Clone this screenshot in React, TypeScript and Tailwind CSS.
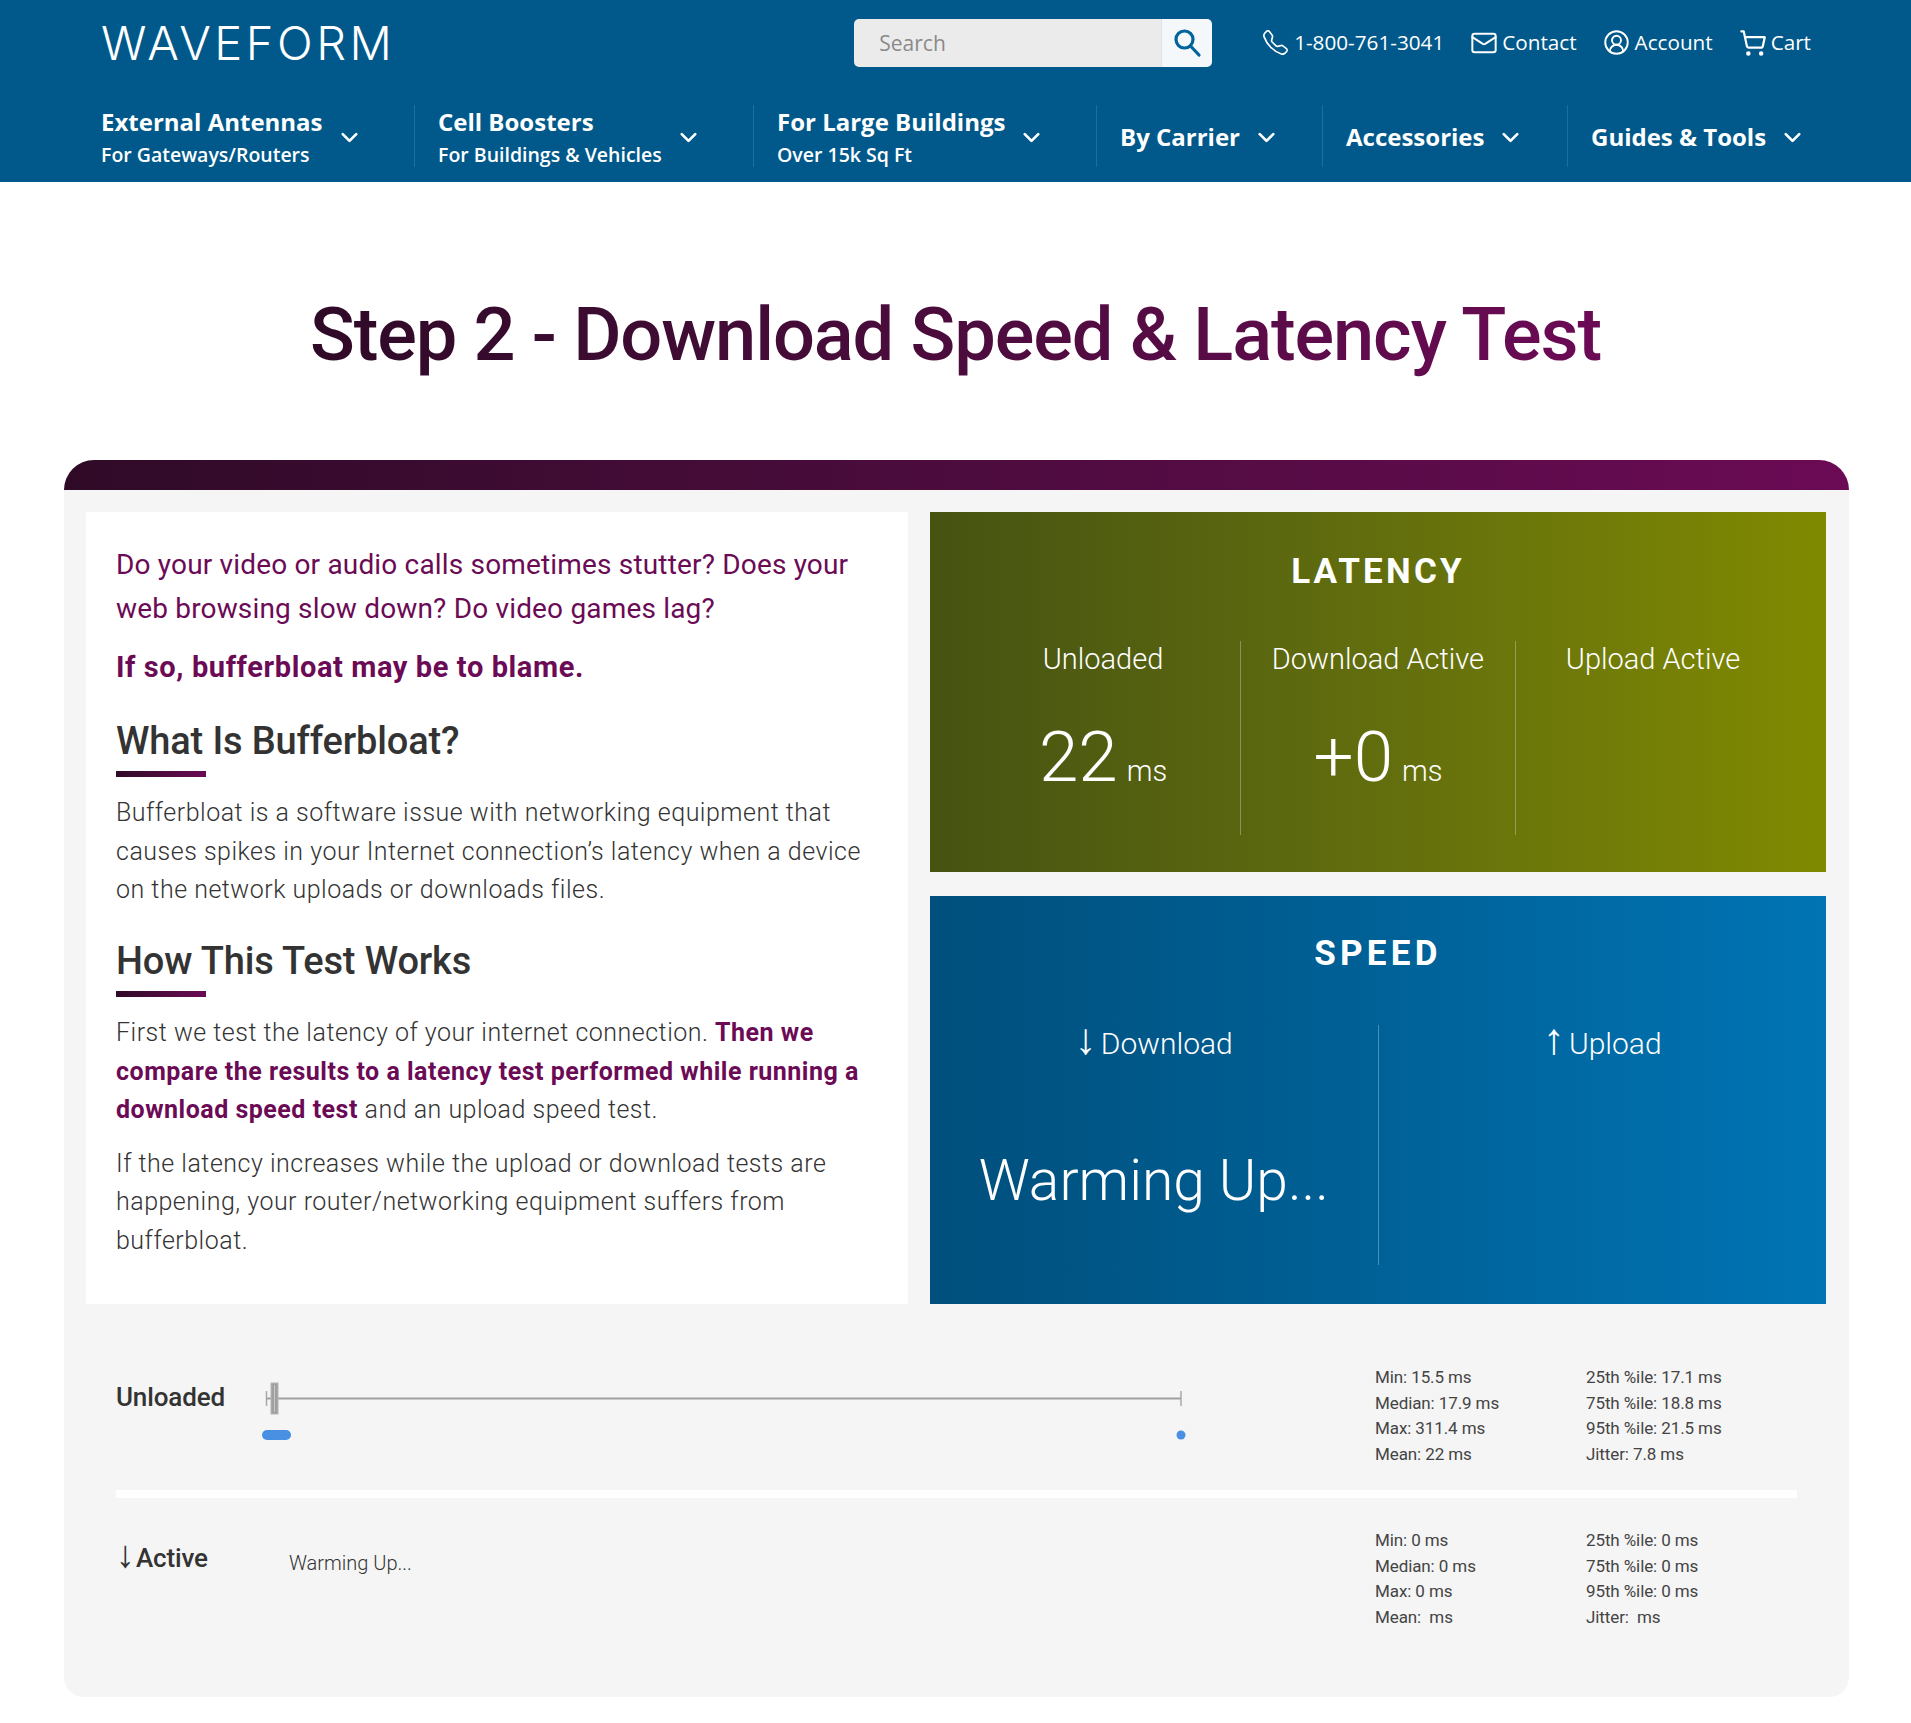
import React from "react";
import { ChevronDown, CircleUserRound, Mail, ShoppingCart } from "lucide-react";
import { BsTelephone } from "react-icons/bs";

const body = "font-['Roboto',sans-serif]";
const arrow = "font-['Liberation_Serif',serif] font-normal text-[1.45em] leading-none -mr-[3px]";
const arrowTight = "font-['Liberation_Serif',serif] font-normal text-[1.45em] leading-none -mr-[5px]";
const para = "text-[25px] leading-[38.6px] text-[#333333] font-light tracking-[0.5px]";
const nav = [
  { w: "w-[313px]", first: true, t: "External Antennas", s: "For Gateways/Routers" },
  { w: "w-[339px]", t: "Cell Boosters", s: "For Buildings & Vehicles" },
  { w: "w-[343px]", t: "For Large Buildings", s: "Over 15k Sq Ft" },
  { w: "w-[226px]", t: "By Carrier" },
  { w: "w-[245px]", t: "Accessories" },
  { w: "w-[243px]", t: "Guides & Tools" },
];

function Heading({ children }: { children: React.ReactNode }) {
  return (
    <div className="mb-[17px]">
      <h2 className="text-[38px] leading-[46px] font-medium text-[#333333] tracking-[-0.15px]">{children}</h2>
      <div className="mt-[7px] h-[6px] w-[90px] bg-gradient-to-r from-[#2f0a27] to-[#6b0a55]" />
    </div>
  );
}

function Stats({ a, b, top }: { a: string[]; b: string[]; top?: boolean }) {
  return (
    <div className={`ml-auto flex w-[422px] text-[17px] leading-[25.6px] text-[#444444] tracking-[-0.1px] ${top ? "mt-[2px]" : ""}`}>
      <div className="w-[211px]">{a.map((x) => <div key={x} className="whitespace-pre">{x}</div>)}</div>
      <div>{b.map((x) => <div key={x} className="whitespace-pre">{x}</div>)}</div>
    </div>
  );
}

function Metric({ label, value, border }: { label: string; value?: string; border?: boolean }) {
  return (
    <div className={`flex-1 h-[194px] flex flex-col items-center ${border ? "border-r border-white/30" : ""}`}>
      <div className="text-[29px] leading-[36px] font-light">{label}</div>
      {value && (
        <div className="mt-[40px] flex items-baseline gap-[9px] leading-[80px]">
          <span className="text-[71px] font-light">{value}</span>
          <span className="text-[29px] font-light">ms</span>
        </div>
      )}
    </div>
  );
}

export default function App() {
  return (
    <div className={`${body} bg-white min-h-[1723px] pb-[26px]`}>
      <header className="bg-[#00598a] h-[182px] text-white font-['Open_Sans',sans-serif] pl-[101px]">
        <div className="flex items-center h-[86px] pr-[100px]">
          <div className="font-['Inter',sans-serif] font-light text-[47px] leading-none tracking-[3.5px] -mt-[2px]">WAVEFORM</div>
          <div className="ml-[459px] flex h-[48px] w-[358px] rounded-[5px] overflow-hidden">
            <div className="flex-1 bg-[#ebebeb] text-[#8a8a8a] text-[21px] flex items-center pl-[25px] pt-[2px]">Search</div>
            <div className="w-[51px] bg-[#f4f8fb] flex items-center justify-center border-l border-[#dde3e6]">
              <svg width="30" height="30" viewBox="0 0 30 30" fill="none" stroke="#00639b" strokeWidth="3.2" strokeLinecap="round">
                <circle cx="12.5" cy="11.5" r="8.5" />
                <line x1="18.5" y1="18" x2="27" y2="27" />
              </svg>
            </div>
          </div>
          <div className="ml-auto flex items-center text-[20.7px] gap-[26px]">
            <span className="flex items-center gap-[6px]"><BsTelephone size={25} />1-800-761-3041</span>
            <span className="flex items-center gap-[4px]"><Mail size={28} strokeWidth={1.7} />Contact</span>
            <span className="flex items-center gap-[5px]"><CircleUserRound size={27} strokeWidth={1.7} />Account</span>
            <span className="flex items-center gap-[4px]"><ShoppingCart size={28} strokeWidth={1.9} />Cart</span>
          </div>
        </div>
        <nav className="flex h-[62px] mt-[19px]">
          {nav.map((n) => (
            <div key={n.t} className={`${n.w} flex items-center shrink-0 gap-[13px] ${n.s ? "pt-[3px]" : "pt-[2px]"} ${n.first ? "" : "border-l border-[#1d6e9b] pl-[23px]"}`}>
              <div className="whitespace-nowrap">
                <div className="text-[24px] leading-[32px] font-bold">{n.t}</div>
                {n.s && <div className="text-[19.5px] leading-[30px] font-semibold mt-[2px]">{n.s}</div>}
              </div>
              <ChevronDown size={27} strokeWidth={2.4} />
            </div>
          ))}
        </nav>
      </header>

      <h1 className="mt-[107px] text-center text-[74px] leading-[92px] font-medium">
        <span className="bg-gradient-to-r from-[#2f0a27] to-[#6b0a55] bg-clip-text text-transparent tracking-[-1.1px]">
          Step 2 - Download Speed &amp; Latency Test
        </span>
      </h1>

      <main className="mt-[79px] ml-[64px] mr-[62px] bg-[#f5f5f5] rounded-t-[30px] rounded-b-[20px] h-[1237px] overflow-hidden">
        <div className="h-[30px] bg-gradient-to-r from-[#2f0a27] to-[#6b0a55]" />
        <div className="grid grid-cols-[822px_896px] gap-x-[22px] px-[22px] pt-[22px]">
          <section className="bg-white h-[792px] px-[30px] pt-[31px]">
            <p className="text-[#6b0a55] text-[28px] leading-[43.6px] tracking-[0.17px]">
              Do your video or audio calls sometimes stutter? Does your web browsing slow down? Do video games lag?
            </p>
            <p className="text-[#6b0a55] text-[29px] leading-[44px] font-bold mt-[15px] mb-[29px] tracking-[0.6px]">
              If so, bufferbloat may be to blame.
            </p>
            <Heading>What Is Bufferbloat?</Heading>
            <p className={para}>
              Bufferbloat is a software issue with networking equipment that causes spikes in your Internet connection’s latency when a device on the network uploads or downloads files.
            </p>
            <div className="h-[28px]" />
            <Heading>How This Test Works</Heading>
            <p className={para}>
              First we test the latency of your internet connection.{" "}
              <b className="font-bold text-[#6b0a55]">Then we compare the results to a latency test performed while running a download speed test</b>{" "}
              and an upload speed test.
            </p>
            <p className={`mt-[15px] ${para}`}>
              If the latency increases while the upload or download tests are happening, your router/networking equipment suffers from bufferbloat.
            </p>
          </section>

          <div className="flex flex-col gap-[24px] text-white">
            <section className="h-[360px] bg-gradient-to-r from-[#465311] to-[#808a00] pt-[40px] px-[36px]">
              <h3 className="text-center text-[35px] leading-[40px] font-bold tracking-[3.2px]">LATENCY</h3>
              <div className="flex mt-[49px]">
                <Metric label="Unloaded" value="22" border />
                <Metric label="Download Active" value="+0" border />
                <Metric label="Upload Active" />
              </div>
            </section>
            <section className="h-[408px] bg-gradient-to-r from-[#004f7c] to-[#0074b4] pt-[38px]">
              <h3 className="text-center text-[35px] leading-[40px] font-bold tracking-[4.3px]">SPEED</h3>
              <div className="flex mt-[51px]">
                <div className="flex-1 h-[240px] border-r border-white/30 flex flex-col items-center">
                  <div className="text-[30px] h-[36px] leading-[36px] font-light -mt-[7px]"><span className={`inline-block ${arrow}`}>↓</span> Download</div>
                  <div className="mt-[92px] text-[57px] leading-[70px] font-light">Warming Up...</div>
                </div>
                <div className="flex-1 flex flex-col items-center">
                  <div className="text-[30px] h-[36px] leading-[36px] font-light -mt-[7px]"><span className={`inline-block ${arrow}`}>↑</span> Upload</div>
                </div>
              </div>
            </section>
          </div>
        </div>

        <div className="mx-[52px] mt-[59px] text-[#333333]">
          <div className="flex h-[127px] items-start">
            <div className="text-[26px] leading-[40px] font-medium w-[146px] mt-[14px] tracking-[-0.15px]">Unloaded</div>
            <svg width="930" height="70" className="mt-[12px]">
              <line x1="4.5" y1="16" x2="4.5" y2="31" stroke="#a8a8a8" strokeWidth="1.5" />
              <line x1="4.5" y1="23.5" x2="919" y2="23.5" stroke="#a0a0a0" strokeWidth="2" />
              <line x1="919" y1="16" x2="919" y2="31" stroke="#a8a8a8" strokeWidth="1.5" />
              <rect x="9" y="8" width="7" height="31" fill="#a0a0a0" stroke="#b5b5b5" strokeWidth="1" />
              <line x1="12.5" y1="10" x2="12.5" y2="37" stroke="#c8c8c8" strokeWidth="1" />
              <rect x="0" y="55" width="29" height="10" rx="5" fill="#4a90e2" />
              <circle cx="919" cy="60" r="4.5" fill="#4a90e2" />
            </svg>
            <Stats
              top
              a={["Min: 15.5 ms", "Median: 17.9 ms", "Max: 311.4 ms", "Mean: 22 ms"]}
              b={["25th %ile: 17.1 ms", "75th %ile: 18.8 ms", "95th %ile: 21.5 ms", "Jitter: 7.8 ms"]}
            />
          </div>
          <div className="h-[8px] bg-white" />
          <div className="flex items-start pt-[30px]">
            <div className="text-[26px] h-[40px] leading-[40px] font-medium w-[173px] mt-[8px] tracking-[-0.15px]"><span className={`inline-block ${arrowTight}`}>↓</span> Active</div>
            <div className="text-[20px] leading-[32px] mt-[19px] font-light">Warming Up...</div>
            <Stats
              a={["Min: 0 ms", "Median: 0 ms", "Max: 0 ms", "Mean:  ms"]}
              b={["25th %ile: 0 ms", "75th %ile: 0 ms", "95th %ile: 0 ms", "Jitter:  ms"]}
            />
          </div>
        </div>
      </main>
    </div>
  );
}
